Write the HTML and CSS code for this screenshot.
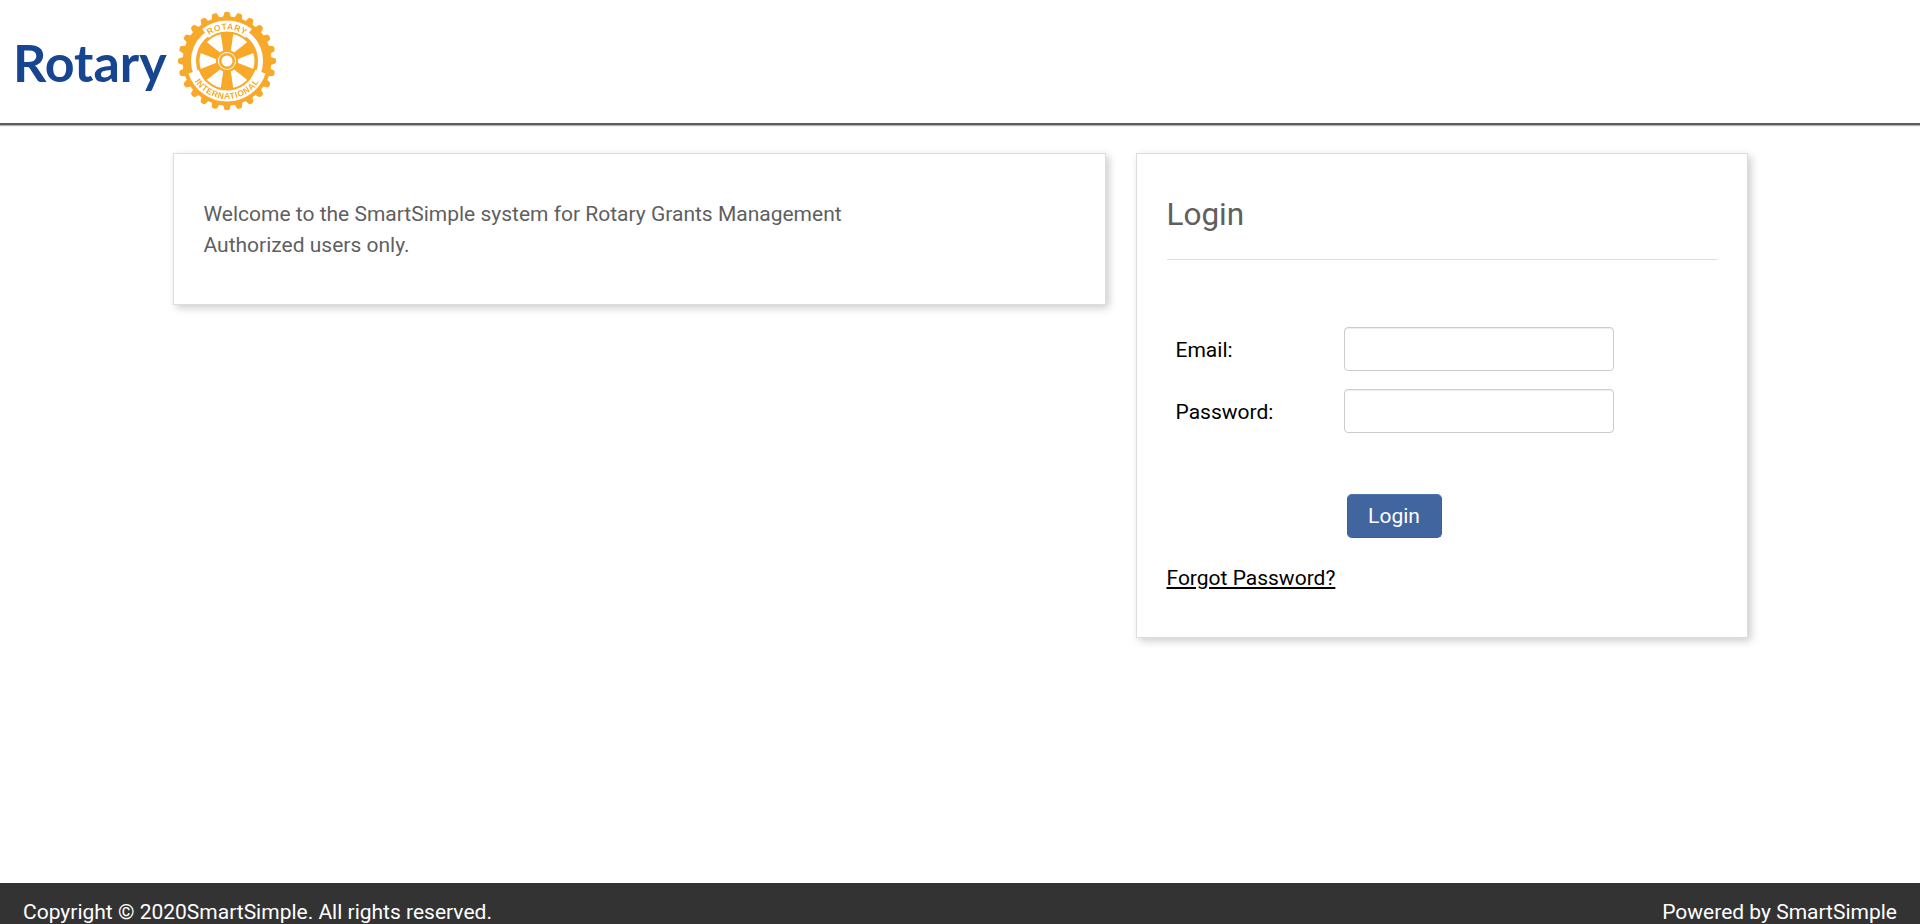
FILE: index.html
```html
<!DOCTYPE html>
<html lang="en">
<head>
    <meta charset="UTF-8">
    <meta name="viewport" content="width=device-width, initial-scale=1.0">
    <title>Rotary Grants Management - Login</title>
    <link rel="stylesheet" href="styles.css">
</head>
<body>
    <header class="site-header">
        <div class="logo">
            <span class="logo-name">Rotary</span>
            <svg class="logo-wheel" width="100" height="100" viewBox="0 0 100 100" role="img" aria-label="Rotary International">
                <defs>
                    <path id="tooth" d="M45.500 8 L47.400 1.500 Q50 0 52.600 1.500 L54.500 8 Z"/>
                    <g id="teethPair"><use href="#tooth"/><use href="#tooth" transform="rotate(15 50 50)"/></g>
                    <g id="teethQuarter">
                        <use href="#teethPair"/>
                        <use href="#teethPair" transform="rotate(30 50 50)"/>
                        <use href="#teethPair" transform="rotate(60 50 50)"/>
                    </g>
                    <path id="spoke" d="M43.500 21 H56.500 L53.500 42 H46.500 Z"/>
                    <path id="arcTop" d="M 18.500 50 A 31.500 31.500 0 0 1 81.500 50"/>
                    <path id="arcBottom" d="M 12 50 A 38 38 0 0 0 88 50"/>
                </defs>
                <g class="wheel-gold">
                    <use href="#teethQuarter"/>
                    <use href="#teethQuarter" transform="rotate(90 50 50)"/>
                    <use href="#teethQuarter" transform="rotate(180 50 50)"/>
                    <use href="#teethQuarter" transform="rotate(270 50 50)"/>
                    <circle cx="50" cy="50" r="44.500"/>
                </g>
                <!-- white channel, wider where the two words sit -->
                <circle class="wheel-channel" cx="50" cy="50" r="33.500"/>
                <path class="wheel-banner" d="M28.500 22.400 A35 35 0 0 1 71.500 22.400"/>
                <path class="wheel-banner" d="M16.700 60.800 A35 35 0 0 0 83.300 60.800"/>
                <circle class="wheel-white" cx="50" cy="50" r="27.500"/>
                <g class="wheel-gold">
                    <use href="#spoke"/>
                    <use href="#spoke" transform="rotate(60 50 50)"/>
                    <use href="#spoke" transform="rotate(120 50 50)"/>
                    <use href="#spoke" transform="rotate(180 50 50)"/>
                    <use href="#spoke" transform="rotate(240 50 50)"/>
                    <use href="#spoke" transform="rotate(300 50 50)"/>
                    <circle cx="50" cy="50" r="11"/>
                </g>
                <circle class="wheel-white" cx="50" cy="50" r="9"/>
                <circle class="wheel-gold" cx="50" cy="50" r="8"/>
                <circle class="wheel-white" cx="50" cy="50" r="5.500"/>
                <text class="wheel-text"><textPath href="#arcTop" startOffset="50%">ROTARY</textPath></text>
                <text class="wheel-text"><textPath href="#arcBottom" startOffset="50%">INTERNATIONAL</textPath></text>
            </svg>
        </div>
    </header>

    <main class="content">
        <section class="card card-welcome">
            <p>Welcome to the SmartSimple system for Rotary Grants Management</p>
            <p>Authorized users only.</p>
        </section>

        <section class="card card-login">
            <h1>Login</h1>
            <form class="login-form" onsubmit="return false">
                <label for="email">Email:</label>
                <input type="text" id="email" name="email">
                <label for="password">Password:</label>
                <input type="password" id="password" name="password">
                <button type="submit" class="btn-login">Login</button>
            </form>
            <a class="forgot-link" href="#">Forgot Password?</a>
        </section>
    </main>

    <footer class="site-footer">
        <span>Copyright © 2020SmartSimple. All rights reserved.</span>
        <span>Powered by SmartSimple</span>
    </footer>
</body>
</html>
```

FILE: styles.css
```css
:root {
    --rotary-blue: #17458f;
    --rotary-gold: #f9a92a;
    --text-grey: #5f5f5f;
    --line-color: #dddddd;
}

* {
    box-sizing: border-box;
    margin: 0;
    padding: 0;
}

html, body {
    height: 100%;
}

body {
    display: flex;
    flex-direction: column;
    background-color: white;
    color: black;
    font-family: Roboto, 'Liberation Sans', sans-serif;
    font-size: 21px;
    line-height: 30px;
}

/* header */
.site-header {
    height: 125px;
    border-bottom: 2px solid #5c5c5c;
    box-shadow: 0 1px 1px rgba(0, 0, 0, 0.3);
    flex-shrink: 0;
}

.logo {
    display: flex;
    align-items: center;
    height: 123px;
    padding-left: 13px;
}

.logo-name {
    width: 164px;
    color: var(--rotary-blue);
    font-family: Lato, sans-serif;
    font-size: 52px;
    font-weight: 700;
    line-height: 1;
    filter: blur(0.4px);
}

.logo-wheel {
    margin-top: -1px;
    filter: blur(0.3px);
}

.wheel-gold {
    fill: var(--rotary-gold);
}

.wheel-white {
    fill: white;
}

.wheel-channel {
    fill: none;
    stroke: white;
    stroke-width: 5;
}

.wheel-banner {
    fill: none;
    stroke: white;
    stroke-width: 11;
}

.wheel-text {
    fill: var(--rotary-gold);
    font-family: 'Liberation Sans', sans-serif;
    font-size: 8.5px;
    font-weight: bold;
    letter-spacing: 0.6px;
    text-anchor: middle;
}

/* cards */
.content {
    flex: 1;
    display: flex;
    align-items: flex-start;
    gap: 30px;
    width: 1575px;
    margin: 0 auto;
    padding-top: 28px;
}

.card {
    background: white;
    border: 1px solid var(--line-color);
    box-shadow: 3px 3px 8px rgba(0, 0, 0, 0.2);
}

.card-welcome {
    width: 933px;
    height: 152px;
    padding: 45px 30px 0;
    color: var(--text-grey);
    line-height: 31px;
}

.card-login {
    width: 612px;
    height: 485px;
    padding: 0 30px;
}

.card-login h1 {
    height: 106px;
    padding-top: 41px;
    border-bottom: 1px solid var(--line-color);
    color: var(--text-grey);
    font-size: 31.5px;
    font-weight: 400;
    line-height: 40px;
}

/* form */
.login-form {
    display: grid;
    grid-template-columns: 177px 270px;
    grid-template-rows: 44px 44px auto;
    row-gap: 18px;
    align-items: center;
    padding-top: 67px;
}

.login-form label {
    padding: 2px 0 0 9px;
}

.login-form input {
    height: 44px;
    border: 1px solid #ccc;
    border-radius: 4px;
    box-shadow: inset 0 1px 1px rgba(0, 0, 0, 0.075);
    font-size: 18px;
}

.btn-login {
    grid-column: 2;
    width: 95px;
    height: 44px;
    margin: 43px 0 0 3px;
    background-color: #41659f;
    border: 1px solid #3e5f96;
    border-top-color: #4f74ad;
    border-radius: 5px;
    color: white;
    font-family: inherit;
    font-size: 21px;
    cursor: pointer;
}

.forgot-link {
    display: inline-block;
    margin-top: 25px;
    color: black;
    text-decoration: underline;
}

/* footer */
.site-footer {
    display: flex;
    justify-content: space-between;
    flex-shrink: 0;
    height: 41px;
    padding: 14px 23px 0;
    background-color: #333;
    color: white;
    overflow: hidden;
}
```
